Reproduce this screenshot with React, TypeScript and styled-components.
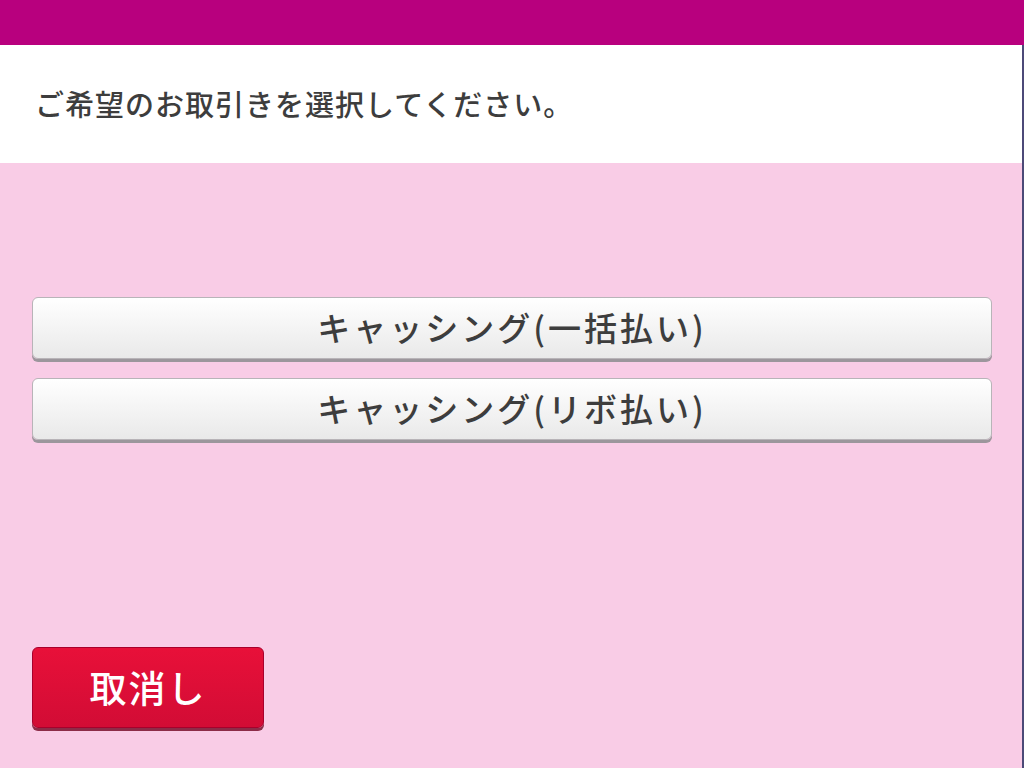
import styled, { createGlobalStyle } from 'styled-components'

const GlobalStyle = createGlobalStyle`
  html, body {
    margin: 0;
    padding: 0;
  }
  body {
    font-family: "Noto Sans CJK JP", "Noto Sans", sans-serif;
  }
`

const options = ['キャッシング(一括払い)', 'キャッシング(リボ払い)']

export default function App() {
  return (
    <>
      <GlobalStyle />
      <Screen>
        <TopBar />
        <Content>
          <Prompt>
            <PromptText>ご希望のお取引きを選択してください。</PromptText>
          </Prompt>
          <Body>
            <OptionList>
              {options.map((label) => (
                <OptionButton key={label} type="button">
                  {label}
                </OptionButton>
              ))}
            </OptionList>
            <CancelButton type="button">取消し</CancelButton>
          </Body>
        </Content>
      </Screen>
    </>
  )
}

const Screen = styled.div`
  width: 1024px;
  height: 768px;
  display: flex;
  flex-direction: column;
  overflow: hidden;
`

const TopBar = styled.div`
  height: 45px;
  flex-shrink: 0;
  background: #b8007e;
`

const Content = styled.div`
  flex: 1;
  display: flex;
  flex-direction: column;
  border-right: 2px solid #4c4a78;
`

const Prompt = styled.div`
  height: 118px;
  flex-shrink: 0;
  background: #ffffff;
  display: flex;
  align-items: center;
  padding-left: 35px;
`

const PromptText = styled.h1`
  margin: 0 0 2px;
  font-size: 29px;
  font-weight: 500;
  color: #3d3d3d;
  letter-spacing: 1px;
`

const Body = styled.div`
  flex: 1;
  display: flex;
  flex-direction: column;
  background: #f9cce6;
  padding: 134px 30px 37px 32px;
`

const OptionList = styled.div`
  display: flex;
  flex-direction: column;
  gap: 16px;
`

const OptionButton = styled.button`
  height: 62px;
  border: 1px solid #b8b4b8;
  border-radius: 6px;
  background: linear-gradient(#ffffff, #e9e9e9);
  box-shadow: 0 3px 0 #9c969c;
  font-family: "Noto Sans CJK JP", sans-serif;
  font-size: 33px;
  font-weight: 500;
  color: #3d3d3d;
  letter-spacing: 3px;
  padding: 0 0 2px;
  margin-bottom: 3px;
  cursor: pointer;
`

const CancelButton = styled.button`
  margin-top: auto;
  width: 232px;
  height: 81px;
  border: 1px solid #a8002c;
  border-radius: 6px;
  background: linear-gradient(#e81039, #d20c35);
  box-shadow: 0 3px 0 #8c2c48;
  font-family: "Noto Sans CJK JP", sans-serif;
  font-size: 37px;
  font-weight: 500;
  color: #ffffff;
  letter-spacing: 2px;
  padding: 0 0 2px;
  margin-bottom: 3px;
  cursor: pointer;
`
